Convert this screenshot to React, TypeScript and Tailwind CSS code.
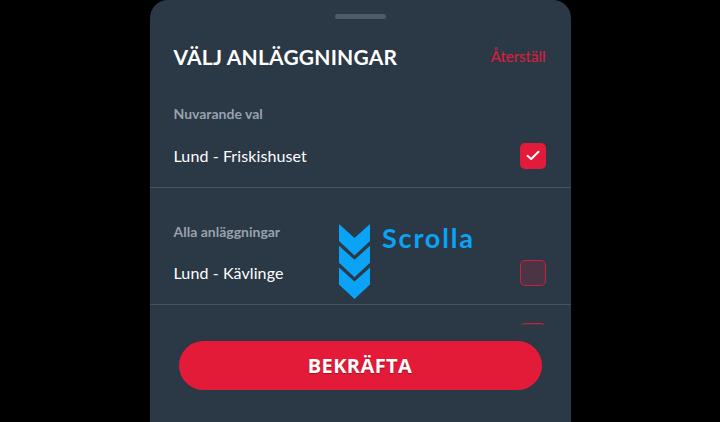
import React from "react";

function Checkbox({ checked }: { checked: boolean }) {
  if (checked) {
    return (
      <div className="w-[26px] h-[26px] rounded-[5px] bg-[#e31b3b] flex items-center justify-center">
        <svg width="14" height="11" viewBox="0 0 14 11" fill="none">
          <path d="M1.5 5.8 L5.2 9 L12.5 1.8" stroke="#fff" strokeWidth="2" strokeLinecap="round" strokeLinejoin="round" />
        </svg>
      </div>
    );
  }
  return <div className="w-[26px] h-[26px] rounded-[5px] bg-[#4b3443] border-[1.5px] border-[#cc1f3d]" />;
}

function Chevrons() {
  const pts = "0,0 15.5,14 31,0 31,17 15.5,31.5 0,17";
  return (
    <svg width="31" height="76" viewBox="0 0 31 76">
      <polygon points={pts} fill="#0aa3f5" />
      <polygon points={pts} fill="#0aa3f5" transform="translate(0 21.8)" />
      <polygon points={pts} fill="#0aa3f5" transform="translate(0 43.6)" />
    </svg>
  );
}

export default function App() {
  const lato = { fontFamily: "Lato, 'Open Sans', sans-serif" };
  return (
    <div className="w-[720px] h-[422px] bg-black overflow-hidden relative">
      <div className="mx-auto w-[421px] h-[440px] bg-[#2b3846] rounded-t-[18px] flex flex-col" style={lato}>
        <div className="mt-[14px] mx-auto w-[51px] h-[5px] rounded-full bg-[#4f5b69]" />
        <div className="mt-[17px] h-[41px] pl-6 pr-[25px] flex items-center justify-between">
          <span className="text-[21px] font-bold text-white tracking-[0.2px]">VÄLJ ANLÄGGNINGAR</span>
          <span className="text-[15px] text-[#e31b3b]">Återställ</span>
        </div>
        <div className="h-[248px] overflow-hidden">
          <div className="pt-[27px] h-[47px] px-6 text-[14px] font-bold text-[#98a1ac] leading-[20px]">Nuvarande val</div>
          <div className="h-[63px] pl-6 pr-[25px] flex items-center justify-between">
            <span className="text-[16px] text-white tracking-[0.1px]">Lund - Friskishuset</span>
            <Checkbox checked />
          </div>
          <div className="h-px bg-[#475461]" />
          <div className="pt-[34px] h-[54px] px-6 text-[14px] font-bold text-[#98a1ac] leading-[20px]">Alla anläggningar</div>
          <div className="h-[62px] pl-6 pr-[25px] flex items-center justify-between">
            <span className="text-[16px] text-white tracking-[0.1px]">Lund - Kävlinge</span>
            <Checkbox checked={false} />
          </div>
          <div className="h-px bg-[#475461]" />
          <div className="h-[62px] pl-6 pr-[25px] flex items-center justify-end">
            <Checkbox checked={false} />
          </div>
        </div>
        <div className="mt-[16px] px-[29px]">
          <button
            className="w-full h-[49px] rounded-full bg-[#e31b38] text-white text-[20px] font-bold tracking-[0.4px]"
            style={{ fontFamily: "'Open Sans', sans-serif", textShadow: "0 1px 1px rgba(0,0,0,0.3)" }}
          >
            BEKRÄFTA
          </button>
        </div>
      </div>
      <div className="absolute left-[339px] top-[224px] flex items-start gap-[12px]">
        <Chevrons />
        <span className="text-[27px] font-bold text-[#0aa3f5] leading-none tracking-[1.8px]" style={lato}>Scrolla</span>
      </div>
    </div>
  );
}
